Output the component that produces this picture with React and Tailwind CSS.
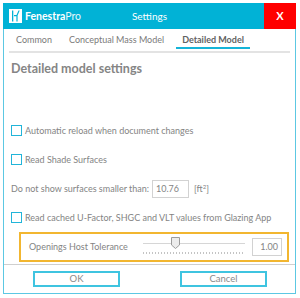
import React from 'react';

function Checkbox({ label }) {
  return (
    <label className="flex items-center gap-[3px] whitespace-nowrap">
      <span className="w-[11px] h-[11px] border border-[#22b5d9] bg-white shrink-0" />
      <span>{label}</span>
    </label>
  );
}

function Logo() {
  return (
    <div className="flex items-center gap-[3px]">
      <svg width="13" height="14" viewBox="0 0 13 14">
        <rect x="0" y="0" width="13" height="14" fill="#fff" />
        <path d="M3 1.5 L4.3 1.5 L4.3 12.5 L3 12.5 Z" fill="#01b2d6" />
        <path d="M5 6 L7.5 6 L9.5 1.5 L10.7 1.5 L8.6 6.6 L8.6 12.5 L7.4 12.5 L7.4 7.3 L5 7.3 Z" fill="#01b2d6" />
      </svg>
      <span className="text-white text-[10.5px] leading-none whitespace-nowrap">
        <span className="font-bold">Fenestra</span>
        <span className="font-normal opacity-90">Pro</span>
      </span>
    </div>
  );
}

export default function App() {
  return (
    <div
      className="w-[300px] h-[298px] bg-white pt-[3px] pl-[3px] pb-[4px] pr-[4px] overflow-hidden"
      style={{ fontFamily: 'Lato, "Open Sans", sans-serif' }}
    >
      <div className="h-full border border-[#5cc8e3] border-t-0 flex flex-col whitespace-nowrap">
        {/* title bar */}
        <div className="h-[26px] bg-[#01b2d6] grid grid-cols-[1fr_auto_1fr] items-center -mx-px shrink-0">
          <div className="pl-[6px]">
            <Logo />
          </div>
          <div className="text-white text-[10px]">Settings</div>
          <div className="flex justify-end h-full">
            <div className="w-[32px] h-full bg-[#ff0000] flex items-center justify-center text-white text-[11px] font-bold">
              X
            </div>
          </div>
        </div>

        {/* tabs */}
        <div className="mx-[5px] border-b-2 border-[#e3e3e3] h-[24px] flex items-stretch text-[9px] text-[#7a7a7a] shrink-0 pl-[1px]">
          <div className="px-[6px] flex items-center">Common</div>
          <div className="px-[6px] flex items-center ml-[5px]">Conceptual Mass Model</div>
          <div className="ml-[6px] px-[6px] flex items-center font-bold text-[#626262] relative">
            Detailed Model
            <span className="absolute left-0 right-0 bottom-[2px] h-[2px] bg-[#15b4d8]" />
          </div>
        </div>

        {/* content */}
        <div className="flex-1 pl-[7px] pr-[6px] text-[9px] text-[#848484]">
          <div className="mt-[8px] text-[12.5px] leading-[16px] font-bold text-[#858585]">Detailed model settings</div>

          <div className="mt-[39px] flex flex-col">
            <div className="h-[29px] flex items-center">
              <Checkbox label="Automatic reload when document changes" />
            </div>
            <div className="h-[29px] flex items-center">
              <Checkbox label="Read Shade Surfaces" />
            </div>
            <div className="h-[29px] flex items-center">
              <span>Do not show surfaces smaller than:</span>
              <span className="ml-[3px] w-[37px] h-[18px] border border-[#d2d2d2] flex items-center px-[3px]">10.76</span>
              <span className="ml-[5px]">[ft<sup className="text-[6px]">2</sup>]</span>
            </div>
            <div className="h-[29px] flex items-center">
              <Checkbox label="Read cached U-Factor, SHGC and VLT values from Glazing App" />
            </div>
          </div>

          <div className="ml-[8px] h-[30px] border-2 border-[#f2b630] flex items-center pl-[8px] pr-[5px]">
            <span className="w-[114px]">Openings Host Tolerance</span>
            <div className="relative w-[102px] h-[20px]">
              <div className="absolute left-0 right-0 top-[6px] h-px bg-[#d6d6d6]" />
              <svg className="absolute left-[28px] top-0" width="9" height="12" viewBox="0 0 9 12">
                <path d="M0.5 0.5 H8.5 V8 L4.5 11.5 L0.5 8 Z" fill="#ececec" stroke="#9c9c9c" />
              </svg>
              <div className="absolute left-0 right-0 top-[15px] h-[2px]" style={{ backgroundImage: 'repeating-linear-gradient(90deg,#c4c4c4 0 1px,transparent 1px 3px)' }} />
            </div>
            <div className="ml-[7px] w-[30px] h-[18px] border border-[#d2d2d2] flex items-center justify-end pr-[3px]">1.00</div>
          </div>
        </div>

        {/* footer */}
        <div className="border-t border-[#cfcfcf] h-[29px] flex items-center text-[9.5px] text-[#8a8a8a] shrink-0">
          <button className="ml-[29px] w-[87px] h-[16px] border-2 border-[#3fc4e0] flex items-center justify-center">OK</button>
          <button className="ml-[60px] w-[87px] h-[16px] border-2 border-[#3fc4e0] flex items-center justify-center">Cancel</button>
        </div>
      </div>
    </div>
  );
}
